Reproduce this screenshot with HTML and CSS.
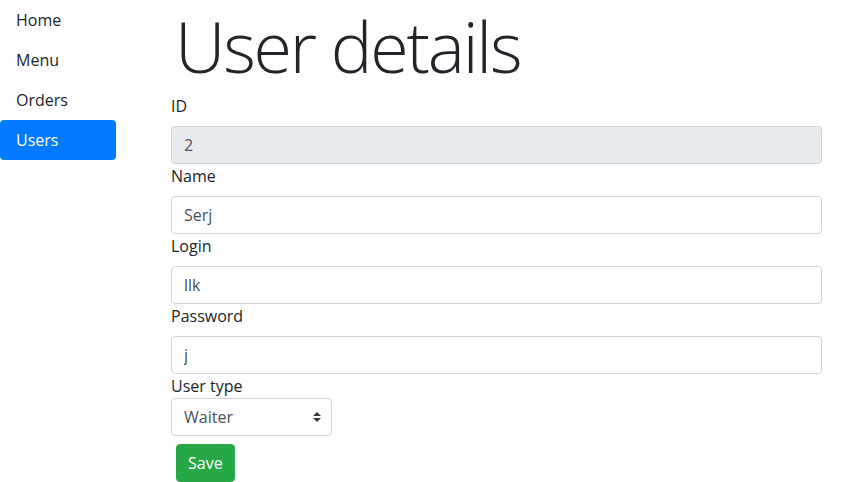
FILE: index.html
```html
<!DOCTYPE html>
<html lang="en">
<head>
<meta charset="utf-8">
<title>User details</title>
<link rel="stylesheet" href="styles.css">
</head>
<body>
<div class="layout">
  <nav class="sidebar">
    <a class="nav-link" href="#">Home</a>
    <a class="nav-link" href="#">Menu</a>
    <a class="nav-link" href="#">Orders</a>
    <a class="nav-link active" href="#">Users</a>
  </nav>
  <main class="main">
    <h1 class="title">User details</h1>
    <form class="form">
      <label class="label">ID</label>
      <input class="control" type="text" value="2" disabled>
      <label class="label">Name</label>
      <input class="control" type="text" value="Serj">
      <label class="label">Login</label>
      <input class="control" type="text" value="llk">
      <label class="label">Password</label>
      <input class="control" type="text" value="j">
      <label class="label tight">User type</label>
      <div class="select-wrap">
        <select class="select">
          <option>Waiter</option>
          <option>Admin</option>
        </select>
        <svg class="select-arrow" width="8" height="10" viewBox="0 0 8 10"><path d="M4 0 L8 4 H0 Z M0 6 H8 L4 10 Z" fill="#343a40"/></svg>
      </div>
      <div class="actions">
        <button class="btn" type="button">Save</button>
      </div>
    </form>
  </main>
</div>
</body>
</html>
```
FILE: styles.css
```css
* { box-sizing: border-box; }
html, body { margin: 0; padding: 0; }
body {
  font-family: "Segoe UI", "Open Sans", "Noto Sans", "Liberation Sans", sans-serif;
  font-size: 16px;
  line-height: 1.5;
  color: #212529;
  background: #fff;
}
.layout { display: flex; align-items: flex-start; }
.sidebar { width: 116px; display: flex; flex-direction: column; flex-shrink: 0; }
.nav-link {
  display: block;
  padding: 8px 16px;
  color: #212529;
  text-decoration: none;
  border-radius: 4px;
  line-height: 24px;
}
.nav-link.active { background: #007bff; color: #fff; }
.main { margin-left: 55px; width: 651px; }
.title {
  font-size: 70px;
  font-weight: 300;
  line-height: 88px;
  padding-top: 2px;
  margin: 0 0 4px;
  letter-spacing: -2.2px;
  white-space: nowrap;
  padding-left: 4px;
}
.form { display: flex; flex-direction: column; align-items: stretch; }
.label { display: block; margin-bottom: 8px; line-height: 24px; }
.label.tight { margin-bottom: 0; }
.control {
  display: block;
  width: 100%;
  height: 38px;
  padding: 6px 12px;
  font: inherit;
  color: #495057;
  background: #fff;
  border: 1px solid #ced4da;
  border-radius: 4px;
}
.control:disabled { background: #e9ecef; opacity: 1; color: #495057; }
.select-wrap { position: relative; width: 161px; }
.select {
  -webkit-appearance: none;
  appearance: none;
  display: block;
  width: 100%;
  height: 38px;
  padding: 6px 28px 6px 12px;
  font: inherit;
  color: #495057;
  background: #fff;
  border: 1px solid #ced4da;
  border-radius: 4px;
}
.select-arrow { position: absolute; right: 11px; top: 14px; pointer-events: none; }
.actions { display: flex; padding-left: 5px; margin-top: 8px; }
.btn {
  font: inherit;
  color: #fff;
  background: #28a745;
  border: 1px solid #28a745;
  border-radius: 4px;
  padding: 6px 11px;
  line-height: 24px;
  height: 38px;
}
```
